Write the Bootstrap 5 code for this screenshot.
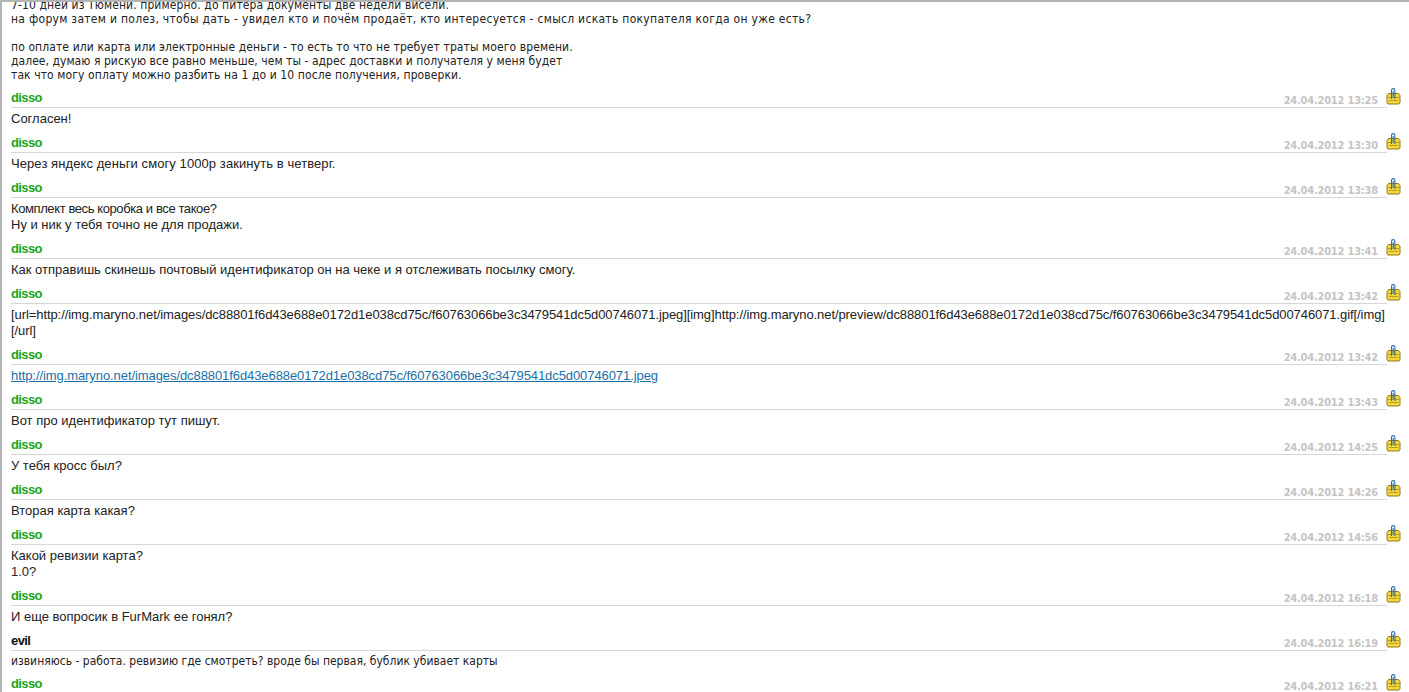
<!DOCTYPE html>
<html lang="ru">
<head>
  <meta charset="UTF-8">
  <title>Сообщения</title>
  <link rel="stylesheet" href="https://cdn.jsdelivr.net/npm/bootstrap@5.3.0/dist/css/bootstrap.min.css">
  <style>
    html, body { height: 692px; overflow: hidden; }
    body { background: #fff; color: #222; font-family: "Liberation Sans", Arial, sans-serif; font-size: 13px; line-height: 16px; }
    .page-frame { height: 692px; overflow: hidden; border-top: 2px solid #b4b4b4; border-left: 2px solid #b4b4b4; padding-left: 9px; }
    .msg-list { margin-top: -7px; }
    .msg-head { height: 19px; margin-top: 7px; border-bottom: 1px solid #d6d6d6; margin-right: 22px; }
    .msg-author { font-size: 13px; font-weight: 700; color: #1aa51a; line-height: 16px; letter-spacing: -.6px; padding-top: 1px; }
    .msg-author.staff { color: #111; }
    .msg-date { font-family: "DejaVu Sans Condensed", "Liberation Sans", sans-serif; font-size: 11px; font-weight: 700; color: #c4c4c4; line-height: 14px; padding-top: 5px; margin-right: 8px; letter-spacing: -.2px; }
    .msg-clip { width: 15px; height: 17px; margin-right: -14px; margin-top: -1px; flex: none; }
    .msg-link { color: #1a6fa8; }
    .msg-text { padding-top: 3px; }
    .msg-latin { letter-spacing: -.08px; }
    .msg-tahoma { font-family: "DejaVu Sans Condensed", "Liberation Sans", sans-serif; font-size: 12px; line-height: 14px; }
    .msg-first { padding-top: 3px; letter-spacing: .1px; }
    .msg-wide { letter-spacing: .29px; }
    .msg-tight { letter-spacing: -.4px; }
    .msg-loose { letter-spacing: .08px; }
    .msg-narrow { letter-spacing: .05px; }
  </style>
</head>
<body>
  <div class="page-frame">
    <div class="msg-list" id="list">
      <div class="msg-tahoma msg-first">7-10 дней из Тюмени. примерно. до питера документы две недели висели.<br><span class="msg-wide">на форум затем и полез, чтобы дать - увидел кто и почём продаёт, кто интересуется - смысл искать покупателя когда он уже есть?</span><br><br>по оплате или карта или электронные деньги - то есть то что не требует траты моего времени.<br><span class="msg-narrow">далее, думаю я рискую все равно меньше, чем ты - адрес доставки и получателя у меня будет</span><br>так что могу оплату можно разбить на 1 до и 10 после получения, проверки.</div>
    </div>
  </div>
  <script src="https://cdn.jsdelivr.net/npm/bootstrap@5.3.0/dist/js/bootstrap.bundle.min.js"></script>
  <script>
    const clip = '<svg class="msg-clip" viewBox="0 0 15 17"><path d="M2.5 5.5h10l1.5 2v7l-1 1.5h-11l-1-1.5v-7z" fill="#f5d83c" stroke="#8f7a1c"/><path d="M2 9.5h11M3 12.5h9" stroke="#b89c20"/><path d="M5.5 11V2.3a1.7 1.7 0 0 1 3.4 0V11M7.2 3v6" fill="none" stroke="#2a70b0" stroke-width="1.1"/></svg>';
    const posts = [
      ['disso', '24.04.2012 13:25', 'Согласен!'],
      ['disso', '24.04.2012 13:30', '<span class="msg-loose">Через яндекс деньги смогу 1000р закинуть в четверг.</span>'],
      ['disso', '24.04.2012 13:38', '<span class="msg-tight">Комплект весь коробка и все такое?</span><br>Ну и ник у тебя точно не для продажи.'],
      ['disso', '24.04.2012 13:41', 'Как отправишь скинешь почтовый идентификатор он на чеке и я отслеживать посылку смогу.'],
      ['disso', '24.04.2012 13:42', '<span class="msg-latin">[url=http://img.maryno.net/images/dc88801f6d43e688e0172d1e038cd75c/f60763066be3c3479541dc5d00746071.jpeg][img]http://img.maryno.net/preview/dc88801f6d43e688e0172d1e038cd75c/f60763066be3c3479541dc5d00746071.gif[/img]<br>[/url]</span>'],
      ['disso', '24.04.2012 13:42', '<a class="msg-link msg-latin" href="#">http://img.maryno.net/images/dc88801f6d43e688e0172d1e038cd75c/f60763066be3c3479541dc5d00746071.jpeg</a>'],
      ['disso', '24.04.2012 13:43', 'Вот про идентификатор тут пишут.'],
      ['disso', '24.04.2012 14:25', 'У тебя кросс был?'],
      ['disso', '24.04.2012 14:26', 'Вторая карта какая?'],
      ['disso', '24.04.2012 14:56', 'Какой ревизии карта?<br>1.0?'],
      ['disso', '24.04.2012 16:18', 'И еще вопросик в FurMark ее гонял?'],
      ['evil', '24.04.2012 16:19', 'извиняюсь - работа. ревизию где смотреть? вроде бы первая, бублик убивает карты'],
      ['disso', '24.04.2012 16:21', '']
    ];
    document.getElementById('list').insertAdjacentHTML('beforeend', posts.map(p =>
      `<div class="msg-head d-flex justify-content-between align-items-start"><span class="msg-author ${p[0] === 'evil' ? 'staff' : ''}">${p[0]}</span><span class="d-flex align-items-start ms-auto"><span class="msg-date">${p[1]}</span>${clip}</span></div><div class="msg-text ${p[0] === 'evil' ? 'msg-tahoma' : ''}">${p[2]}</div>`
    ).join(''));
  </script>
</body>
</html>
